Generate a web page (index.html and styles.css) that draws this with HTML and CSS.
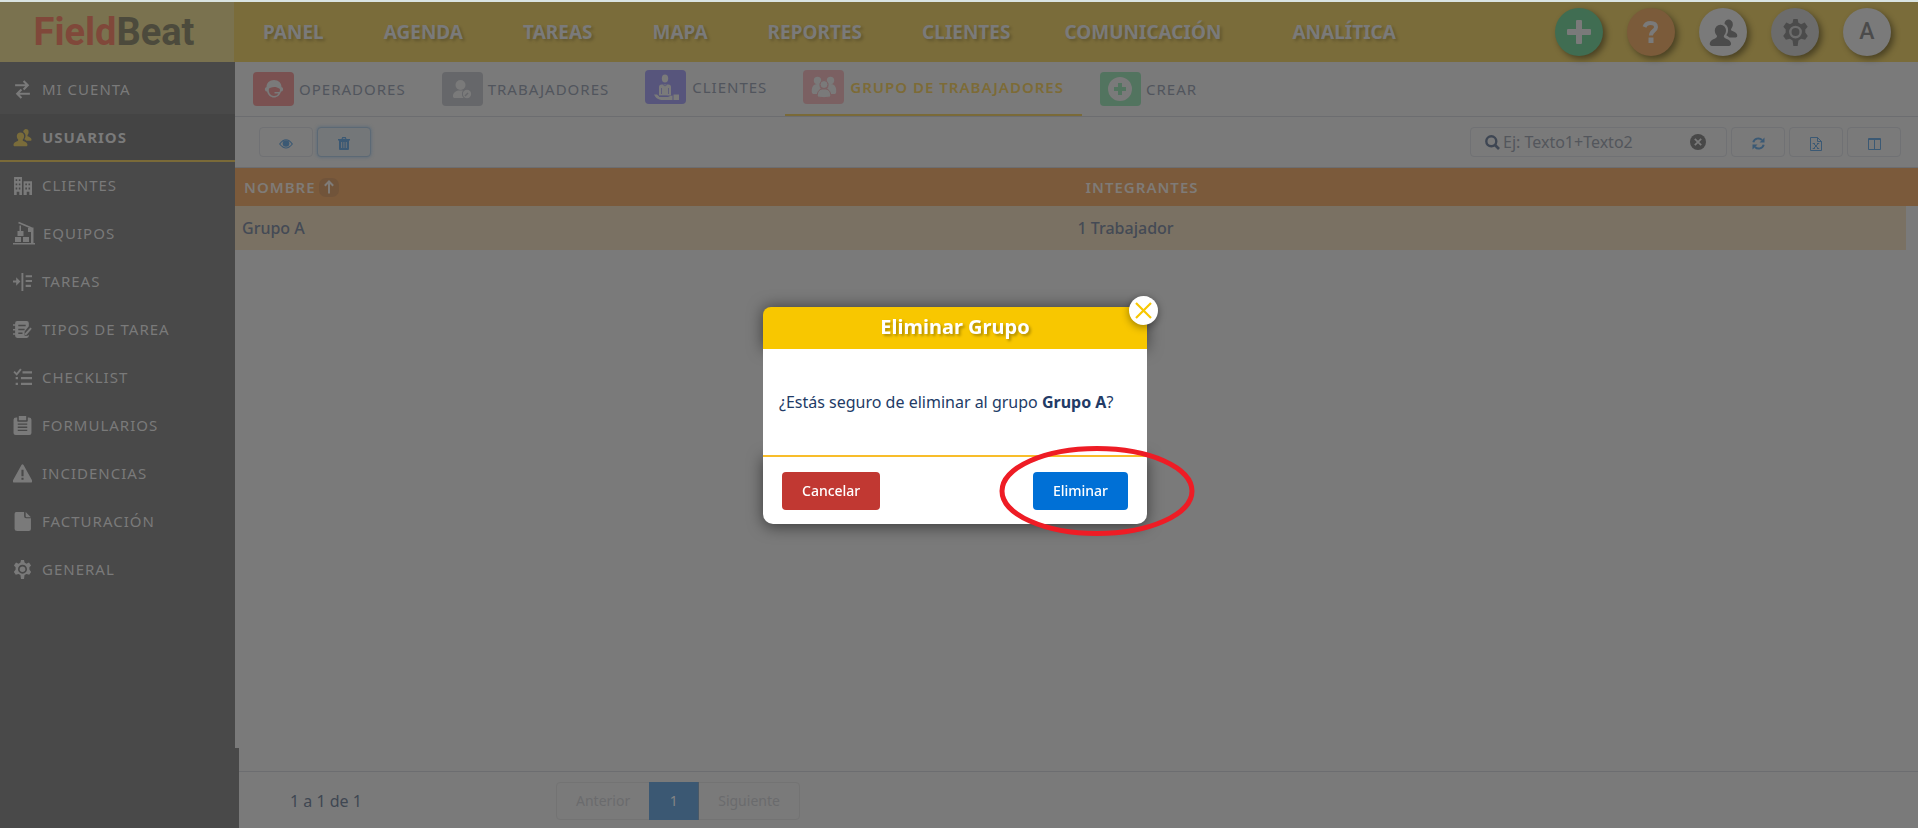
FILE: index.html
```html
<!DOCTYPE html>
<html lang="es">
<head>
<meta charset="utf-8">
<title>FieldBeat - Grupo de trabajadores</title>
<link rel="stylesheet" href="styles.css">
</head>
<body>
<svg class="sprite" aria-hidden="true">
  <symbol id="i-users" viewBox="0 0 28 28"><path d="M18.500 1.500a4.500 4.500 0 0 1 4.500 4.800c0 2-1 3.200-1.600 4.200-.5 1 .2 1.600 1.300 2.100 3 1.300 4.600 2.600 4.600 4.600 0 1-.7 1.600-1.600 1.600h-6c-1-1-2-1.600-3-2.100 1.400-2 2-4 1.600-6.600-.4-2-1.500-3.500-3.300-4.300a4.400 4.400 0 0 1 3.500-4.300z"/><path d="M11 6.500a5.300 5.300 0 0 1 5.400 5.600c0 2.300-1 3.700-1.900 4.900-.7 1.200 0 2 1.600 2.700 3.400 1.400 5.200 2.800 5.200 5.200 0 1.300-.8 2.100-2 2.100H2.700c-1.200 0-2-.8-2-2.100 0-2.400 1.800-3.800 5.200-5.200 1.600-.7 2.300-1.500 1.600-2.700-.9-1.200-1.900-2.600-1.900-4.900A5.300 5.300 0 0 1 11 6.500z"/></symbol>
  <symbol id="i-gear" viewBox="0 0 24 24"><path fill-rule="evenodd" d="M10.100 0h3.800l.7 3.300 2.300 1.300 3.300-1.500 2.600 3.700-2.100 2.500v2.700l2.200 3-2.400 3.500-3.500-.9-2.400 1.500-.7 4.900h-3.800l-.7-4.900L7 17.600l-3.500.9-2.400-3.500 2.200-3V9.300L1.200 6.800l2.600-3.700L7.100 4.600l2.300-1.300zM12 5.900a5.700 5.700 0 1 0 0 11.400 5.700 5.700 0 0 0 0-11.400z"/><circle cx="12" cy="11.600" r="3.500"/></symbol>
</svg>

<div class="app">
  <header class="topbar">
    <a class="logo" href="#"><span class="logo__a">Field</span><span class="logo__b">Beat</span></a>
    <nav class="nav" aria-label="Principal">
      <a href="#">PANEL</a>
      <a href="#">AGENDA</a>
      <a href="#">TAREAS</a>
      <a href="#">MAPA</a>
      <a href="#">REPORTES</a>
      <a href="#">CLIENTES</a>
      <a href="#" class="nav__wide">COMUNICACIÓN</a>
      <a href="#">ANALÍTICA</a>
    </nav>
    <div class="actions">
      <button class="round round--green" aria-label="Agregar"><svg width="24" height="24" viewBox="0 0 24 24"><path d="M9 1q0-1 1-1h4q1 0 1 1v8h8q1 0 1 1v4q0 1-1 1h-8v8q0 1-1 1h-4q-1 0-1-1v-8H1q-1 0-1-1v-4q0-1 1-1h8z"/></svg></button>
      <button class="round round--orange" aria-label="Ayuda"><svg width="18" height="22" viewBox="0 0 18 22"><path d="M2.500 6C3.500 3 6 2 8.500 2c3.600 0 5.500 1.700 5.500 4.200 0 3.500-5 3.400-5 8.300" fill="none" stroke="currentColor" stroke-width="4"/><path d="M6.500 16.500h5V22h-5z"/></svg></button>
      <button class="round" aria-label="Usuarios"><svg width="29" height="29"><use href="#i-users"/></svg></button>
      <button class="round round--gray" aria-label="Ajustes"><svg width="27" height="27"><use href="#i-gear"/></svg></button>
      <button class="round round--letter">A</button>
    </div>
  </header>

  <div class="body">
    <aside class="sidebar">
      <a href="#" class="side side--first"><svg viewBox="0 0 18 18"><path d="M2 5h12M10 1l4 4-4 4M16 13H4M8 9l-4 4 4 4" fill="none" stroke="currentColor" stroke-width="2"/></svg>MI CUENTA</a>
      <a href="#" class="side side--active"><svg><use href="#i-users"/></svg>USUARIOS</a>
      <a href="#" class="side"><svg viewBox="0 0 18 18"><path fill-rule="evenodd" d="M1 1h7.500v17H6v-3H3.500v3H1zM2.500 3v1.700h1.500V3zm3 0v1.700H7V3zm-3 4v1.700h1.500V7zm3 0v1.700H7V7zm-3 4v1.700h1.500V11zm3 0v1.700H7V11zM10 5h8v13h-2.500v-3h-2.500v3H10zM11.700 7v1.700h1.500V7zm3 0v1.700h1.500V7zm-3 4v1.700h1.500V11zm3 0v1.700h1.500V11z"/></svg>CLIENTES</a>
      <a href="#" class="side side--big"><svg viewBox="0 0 24 24"><path d="M1 22h22v1.500H1zM3 16h6v5H3zM11 16h6v5h-6zM5.500 10h6v5h-6zM18.500 6.500h3V22h-2.500v-11h-3V7zM7.500 4.500H9V10H7.500z"/><path d="M6.500 1.500l13 5.500" stroke="currentColor" stroke-width="1.800"/></svg>EQUIPOS</a>
      <a href="#" class="side"><svg viewBox="0 0 18 18"><path d="M0 8h3V5l4 4-4 4v-3H0zM8 1h1.800v17H8zM12 3h6v2h-6zM12 7.500h6v2h-6zM12 12h5v2.300h-5z"/></svg>TAREAS</a>
      <a href="#" class="side"><svg viewBox="0 0 18 18"><path fill-rule="evenodd" d="M4 1h9q2 0 2 2v3l-4 5v4h3l1-1v1q0 2-2 2H4q-2 0-2-2v-1H0v-1.500h2V10H0V8.500h2V5.500H0V4h2V3q0-2 2-2zm1 3.500V6h7V4.500zm0 3.700v1.500h6V8.200zm0 3.600v1.500h4v-1.500z"/><path d="M16.500 7l1.300 1.300L13 14l-2 .5.500-2z"/></svg>TIPOS DE TAREA</a>
      <a href="#" class="side"><svg viewBox="0 0 18 18"><path d="M1 3.500l2.500 2.500L7.500 1" fill="none" stroke="currentColor" stroke-width="1.800"/><path d="M9 3h9v2.200H9zM7.500 8.500H18v2.200H7.500zM7.500 14H18v2.200H7.500zM2.500 8.500h2.200v2.200H2.500zM2.500 14h2.200v2.200H2.500z"/></svg>CHECKLIST</a>
      <a href="#" class="side"><svg viewBox="0 0 18 18"><path fill-rule="evenodd" d="M3 1.500h1V4.500q0 1 1 1h8q1 0 1-1v-3h1q2.500 0 2.500 2V16q0 2-2 2h-13q-2 0-2-2V3.500q0-2 2.500-2zM4.500 7v1.300h9V7zm0 3v1.300h9V10zm0 3v1.300h9V13z"/><path d="M5.500 0h7v4h-7z"/></svg>FORMULARIOS</a>
      <a href="#" class="side"><svg viewBox="0 0 18 18"><path fill-rule="evenodd" d="M8 1q1-1.500 2 0l8 14.500q.5 2-1 2H1q-1.500 0-1-2zM8 5.500v6h2v-6zM8 13v2h2v-2z"/></svg>INCIDENCIAS</a>
      <a href="#" class="side"><svg viewBox="0 0 18 18"><path d="M3 0h7.500v4q0 2 2 2H17v10q0 2-2 2H4q-2.500 0-2.500-2V2q0-2 1.500-2zM12 0l5 5h-4q-1 0-1-1z"/></svg>FACTURACIÓN</a>
      <a href="#" class="side"><svg><use href="#i-gear"/></svg>GENERAL</a>
    </aside>

    <main class="main">
      <nav class="tabs" aria-label="Usuarios">
        <a href="#" class="tab"><span class="tile tile--red"><svg width="20" height="20" viewBox="0 0 20 20"><path fill-rule="evenodd" d="M10 1c4.500 0 7.500 3 7.500 7 1.500.6 1.800 2 1.500 3-.3 1-1 1.500-2 1.600-1 3.700-3.700 6-7 6s-6-2.300-7-6c-1-.1-1.700-.6-2-1.600-.3-1 0-2.400 1.500-3 0-4 3-7 7.500-7zM5 9.500c-1 4.500 2 7.500 5 7.500 2 0 3.500-.8 4.500-2.500h-4V13h5c.4-1 .5-2 .4-3-1.900-1-2.900-1.500-3.900-2-2 .2-5 0-7 1.500z"/></svg></span>OPERADORES</a>
        <a href="#" class="tab"><span class="tile tile--gray"><svg width="20" height="20" viewBox="0 0 20 20"><circle cx="8.500" cy="6" r="5"/><path d="M2 19q-1.500-.5-1-3c.6-2.500 3-4 5-4.500h5c-1.500 3-1 5.500 1 7.500z"/><circle cx="15" cy="15" r="5" fill="#66676a"/><circle cx="15" cy="15" r="4.200"/><path d="M13 17l3-3" stroke="#66676a" stroke-width="1.500"/></svg></span>TRABAJADORES</a>
        <a href="#" class="tab tab--up"><span class="tile tile--violet"><svg width="26" height="28" viewBox="0 0 26 28"><ellipse cx="12" cy="5.500" rx="3.200" ry="4"/><path d="M8.500 11.500h7q2.500 0 2.500 2.500v8.500H6V14q0-2.500 2.500-2.500z"/><path d="M8.500 15v6M15.500 15v6M10 11.500l2 1.500 2-1.500" fill="none" stroke="#57557c" stroke-width=".8"/><path d="M1 21.500h3q2 2.500 5 2.500h6q2-1.500 4.500-1.500V27H8Q3 26 1 21.500zM20.500 21.500H26V27h-5.500z"/><path d="M6 23.300h8" stroke="#57557c"/></svg></span>CLIENTES</a>
        <a href="#" class="tab tab--up tab--active"><span class="tile tile--pink"><svg width="26" height="22" viewBox="0 0 26 22"><circle cx="6.500" cy="4.500" r="3.700"/><circle cx="19.500" cy="4.500" r="3.700"/><path d="M1 17c-1-5 1-9 5-9h3c-1 2 0 4 1 5-2 1-3 2.500-3.500 5H2zM25 17c1-5-1-9-5-9h-3c1 2 0 4-1 5 2 1 3 2.500 3.500 5H24z"/><circle cx="13" cy="8.500" r="4" stroke="#7b6062"/><path d="M6.500 21c-1-4 1.500-8 5-8h3c3.500 0 6 4 5 8q-6.500 1.500-13 0z" stroke="#7b6062"/></svg></span>GRUPO DE TRABAJADORES</a>
        <a href="#" class="tab"><span class="tile tile--green"><svg width="24" height="24" viewBox="0 0 24 24"><path fill-rule="evenodd" d="M12 0a12 12 0 1 1 0 24 12 12 0 0 1 0-24zm-2 6v4H6v4h4v4h4v-4h4v-4h-4V6z"/></svg></span>CREAR</a>
      </nav>

      <div class="toolbar">
        <button class="tool" aria-label="Ver"><svg width="14" height="12" viewBox="0 0 14 12"><path d="M.7 6Q7-2.500 13.300 6 7 14 .7 6z" fill="none" stroke="currentColor" stroke-width="1.200"/><circle cx="7" cy="5.500" r="3.300"/></svg></button>
        <button class="tool tool--focus" aria-label="Eliminar grupo"><svg width="12" height="13" viewBox="0 0 12 13"><path fill-rule="evenodd" d="M0 2h3.500l.8-2h3.400l.8 2H12v1.500h-1V12q0 1-1 1H2q-1 0-1-1V3.500H0zM4.700 2h2.600L7 1.200H5zM3.200 5v6h.9V5zm2.300 0v6h.9V5zm2.300 0v6h.9V5z"/></svg></button>
        <div class="search">
          <svg class="search__lens" width="15" height="15" viewBox="0 0 15 15"><circle cx="6.300" cy="6.300" r="5" fill="none" stroke="currentColor" stroke-width="2.400"/><path d="M10 10l4 4" stroke="currentColor" stroke-width="2.600"/></svg>
          <input type="text" aria-label="Buscar" placeholder="Ej: Texto1+Texto2">
          <button class="search__clear" aria-label="Limpiar"><svg width="16" height="16" viewBox="0 0 16 16"><circle cx="8" cy="8" r="8"/><path d="M4.800 4.800l6.400 6.400M11.200 4.800l-6.400 6.400" stroke="#7a7a7a" stroke-width="1.800"/></svg></button>
        </div>
        <button class="tool" aria-label="Actualizar"><svg width="13" height="13" viewBox="0 0 13 13"><path d="M1.300 5.200A5.200 5.200 0 0 1 10 3M11.700 7.800A5.200 5.200 0 0 1 3 10" fill="none" stroke="currentColor" stroke-width="2"/><path d="M12.500.5v5h-5zM.5 12.500v-5h5z"/></svg></button>
        <button class="tool" aria-label="Exportar"><svg width="12" height="14" viewBox="0 0 12 14"><path d="M.5.500h7l4 4v9H.5zM7.500.5v4h4M3.700 6.500l4.500 5M8.200 6.500l-4.500 5M2.700 6.500h2.200M7 6.500h2.200M2.700 11.500h2.200M7 11.500h2.200" fill="none" stroke="currentColor"/></svg></button>
        <button class="tool" aria-label="Columnas"><svg width="13" height="12" viewBox="0 0 13 12"><path d="M.5.500h12v11H.5zM6.500 1v10M.5 1.500h12" fill="none" stroke="currentColor"/></svg></button>
      </div>

      <table class="grid">
        <thead><tr>
          <th scope="col">NOMBRE <span class="sort"><svg width="10" height="14" viewBox="0 0 10 14"><path d="M5 13.500V1.500M.8 5.700L5 1.500l4.200 4.200" fill="none" stroke="currentColor" stroke-width="2"/></svg></span></th>
          <th scope="col">INTEGRANTES</th>
        </tr></thead>
        <tbody><tr><td>Grupo A</td><td>1 Trabajador</td></tr></tbody>
      </table>

      <footer class="foot">
        <div class="foot__bar">
          <span class="count">1 a 1 de 1</span>
          <div class="pager">
            <button disabled>Anterior</button>
            <button class="pager__on">1</button>
            <button disabled>Siguiente</button>
          </div>
        </div>
      </footer>
    </main>
  </div>
</div>

<div class="overlay">
  <section class="modal" role="dialog" aria-labelledby="dlg-title">
    <h2 class="modal__head" id="dlg-title">Eliminar Grupo</h2>
    <p class="modal__body">¿Estás seguro de eliminar al grupo <strong>Grupo A</strong>?</p>
    <div class="modal__foot">
      <button class="btn btn--red">Cancelar</button>
      <button class="btn btn--blue">Eliminar</button>
    </div>
    <button class="modal__close" aria-label="Cerrar"><svg width="17" height="17" viewBox="0 0 17 17"><path d="M1 1l15 15M16 1L1 16" stroke="currentColor" stroke-width="2.200"/></svg></button>
    <svg class="mark" width="196" height="90" viewBox="0 0 196 90"><ellipse cx="98" cy="45" rx="95" ry="42.500" fill="none" stroke="#ee1c25" stroke-width="5"/></svg>
  </section>
</div>
</body>
</html>
```
FILE: styles.css
```css
* { box-sizing: border-box; }
body {
  margin: 0;
  font: 14px/20px "Noto Sans", sans-serif;
  color: #3f4752;
  background: #7a7a7a;
}
a { color: inherit; text-decoration: none; }
button { font: inherit; color: inherit; padding: 0; border: 0; background: none; }
svg { fill: currentColor; flex: none; }
.sprite { display: none; }

.app {
  min-height: 100vh;
  display: flex;
  flex-direction: column;
  border-top: 2px solid #dae4e1;
}

/* Top bar */
.topbar { display: flex; height: 60px; background: #7a6c3a; }
.logo {
  width: 234px;
  display: flex;
  align-items: center;
  justify-content: center;
  padding-right: 6px;
  background: #7a724f;
  font: bold 38px/44px Roboto, sans-serif;
}
.logo__a { color: #80483a; }
.logo__b { color: #4c4a3c; }
.nav {
  flex: 1;
  display: flex;
  align-items: center;
  gap: 60px;
  padding-left: 29px;
  font: bold 19px/28px "Noto Sans", sans-serif;
  color: #7a7a7a;
  text-shadow: 2px 2px 3px rgba(0, 0, 0, .2);
}
.nav__wide { margin: 0 11px 0 -6px; }
.actions { display: flex; align-items: center; gap: 24px; padding-right: 27px; }
.round {
  width: 48px;
  height: 48px;
  display: flex;
  align-items: center;
  justify-content: center;
  border-radius: 50%;
  background: #7a7a7a;
  color: #4b4b4b;
  box-shadow: 3px 3px 6px rgba(0, 0, 0, .4);
}
.round--green { background: #406d52; color: #7a7a7a; }
.round--orange { background: #7b5b3a; color: #7a7a7a; }
.round--gray { background: #6c6c6c; }
.round--letter { font: 500 23px/28px Roboto, sans-serif; }

/* Sidebar */
.body { flex: 1; display: flex; }
.sidebar { width: 235px; background: #494949; color: #7a7a7a; font-size: 15px; letter-spacing: 1px; }
.side {
  height: 48px;
  display: flex;
  align-items: center;
  gap: 10px;
  padding: 0 0 2px 13px;
}
.side svg { width: 19px; height: 19px; }
.side--first { height: 52px; padding-top: 4px; }
.side--active {
  padding-top: 2px;
  background: #444;
  border-bottom: 2px solid #7a6a38;
  font-weight: bold;
}
.side--active svg { color: #7a6c3a; }
.side--big { gap: 7px; padding-left: 12px; }
.side--big svg { width: 24px; height: 24px; }

/* Main */
.main { flex: 1; min-width: 0; display: flex; flex-direction: column; }
.tabs {
  display: flex;
  height: 55px;
  border-bottom: 1px solid #6c6d70;
  color: #51555d;
  font-size: 15px;
  letter-spacing: 1px;
}
.tab { display: flex; align-items: center; gap: 5px; padding: 0 17px 0 18px; }
.tab--up { gap: 6px; padding-right: 18px; padding-bottom: 2px; border-bottom: 2px solid transparent; }
.tab:first-child { padding-right: 18px; }
.tab:nth-child(2) { padding-right: 18px; }
.tab--active { color: #7d6b36; border-bottom-color: #7a6a38; font-weight: 600; }
.tile {
  width: 41px;
  height: 34px;
  display: flex;
  align-items: center;
  justify-content: center;
  border-radius: 4px;
  color: #7a7a7a;
}
.tile--red { background: #7a5151; }
.tile--gray { background: #66676a; }
.tile--violet { background: #57557c; }
.tile--pink { background: #7b6062; }
.tile--green { background: #52745f; }

.toolbar {
  display: flex;
  align-items: center;
  gap: 4px;
  height: 51px;
  padding: 0 17px 0 24px;
  border-bottom: 1px solid #6c6d70;
}
.tool {
  width: 54px;
  height: 30px;
  display: flex;
  align-items: center;
  justify-content: center;
  padding-top: 3px;
  border: 1px solid #707174;
  border-radius: 4px;
  color: #3b5974;
}
.tool--focus { background: #747779; border-color: #5c6975; box-shadow: 0 0 3px 1px #65707a; }
.search {
  width: 257px;
  height: 30px;
  margin-left: auto;
  display: flex;
  align-items: center;
  padding: 0 20px 0 14px;
  border: 1px solid #707174;
  border-radius: 4px;
  color: #3e4653;
}
.search input {
  flex: 1;
  min-width: 0;
  padding: 0 0 0 3px;
  border: 0;
  outline: 0;
  background: none;
  font: 16px/24px "Noto Sans", sans-serif;
}
.search input::placeholder { color: #53565c; opacity: 1; }
.search__clear { display: flex; color: #484848; }

.grid, .grid thead, .grid tbody { display: block; }
.grid tr { display: grid; grid-template-columns: 1fr 1fr; align-items: center; }
.grid thead tr { height: 38px; background: #7b5a3b; }
.grid th {
  display: flex;
  align-items: center;
  gap: 3px;
  padding: 0 9px;
  color: #7f7b77;
  font-size: 15px;
  font-weight: 600;
  letter-spacing: 1px;
}
.sort {
  width: 20px;
  height: 19px;
  display: flex;
  align-items: center;
  justify-content: center;
  border-radius: 7px;
  background: #71543a;
}
.grid tbody tr { height: 44px; margin-right: 12px; background: #7a7163; }
.grid td { padding: 0 7px; font-size: 16px; font-weight: 500; color: #444a55; }

.foot { margin-top: auto; height: 80px; padding-top: 23px; border-left: 4px solid #494949; }
.foot__bar {
  display: flex;
  align-items: center;
  height: 57px;
  padding: 2px 0 0 51px;
  border-top: 1px solid #6c6d70;
}
.count { width: 266px; font-size: 16px; }
.pager { display: flex; height: 38px; border: 1px solid #737373; border-radius: 4px; color: #6a6b6d; }
.pager button { padding: 0 19px; }
.pager .pager__on { margin: -1px 0; width: 50px; background: #3b5873; color: #858585; border-right: 1px solid #4a5967; }

/* Dialog */
.overlay {
  position: fixed;
  inset: 0;
  display: flex;
  align-items: center;
  justify-content: center;
  padding: 3px 8px 0 0;
}
.modal { position: relative; width: 384px; }
.modal__head {
  margin: 0;
  padding: 6px 0 8px;
  border-radius: 8px 8px 0 0;
  background: #f8c700;
  color: #fff;
  text-align: center;
  font: bold 20px/28px "Noto Sans", sans-serif;
  text-shadow: 2px 2px 3px rgba(0, 0, 0, .3);
  box-shadow: 0 0 15px rgba(0, 0, 0, .5);
}
.modal__body {
  position: relative;
  margin: 0;
  padding: 41px 16px;
  background: #fff;
  color: #223b66;
  font-size: 16px;
  line-height: 24px;
}
.modal__foot {
  display: flex;
  justify-content: space-between;
  padding: 15px 19px 14px;
  border-top: 2px solid #f8bd2a;
  border-radius: 0 0 10px 10px;
  background: #fff;
  box-shadow: 0 3px 15px rgba(0, 0, 0, .5);
}
.btn { height: 38px; padding: 0 20px; border-radius: 4px; color: #fff; font-weight: 500; }
.btn--red { background: #c13832; }
.btn--blue { background: #0070d6; }
.modal__close {
  position: absolute;
  top: -11px;
  right: -11px;
  width: 29px;
  height: 29px;
  display: flex;
  align-items: center;
  justify-content: center;
  border-radius: 50%;
  background: #fff;
  color: #f8c700;
  box-shadow: 0 2px 8px rgba(0, 0, 0, .4);
}
.mark { position: absolute; right: -48px; bottom: -12px; pointer-events: none; }
```
